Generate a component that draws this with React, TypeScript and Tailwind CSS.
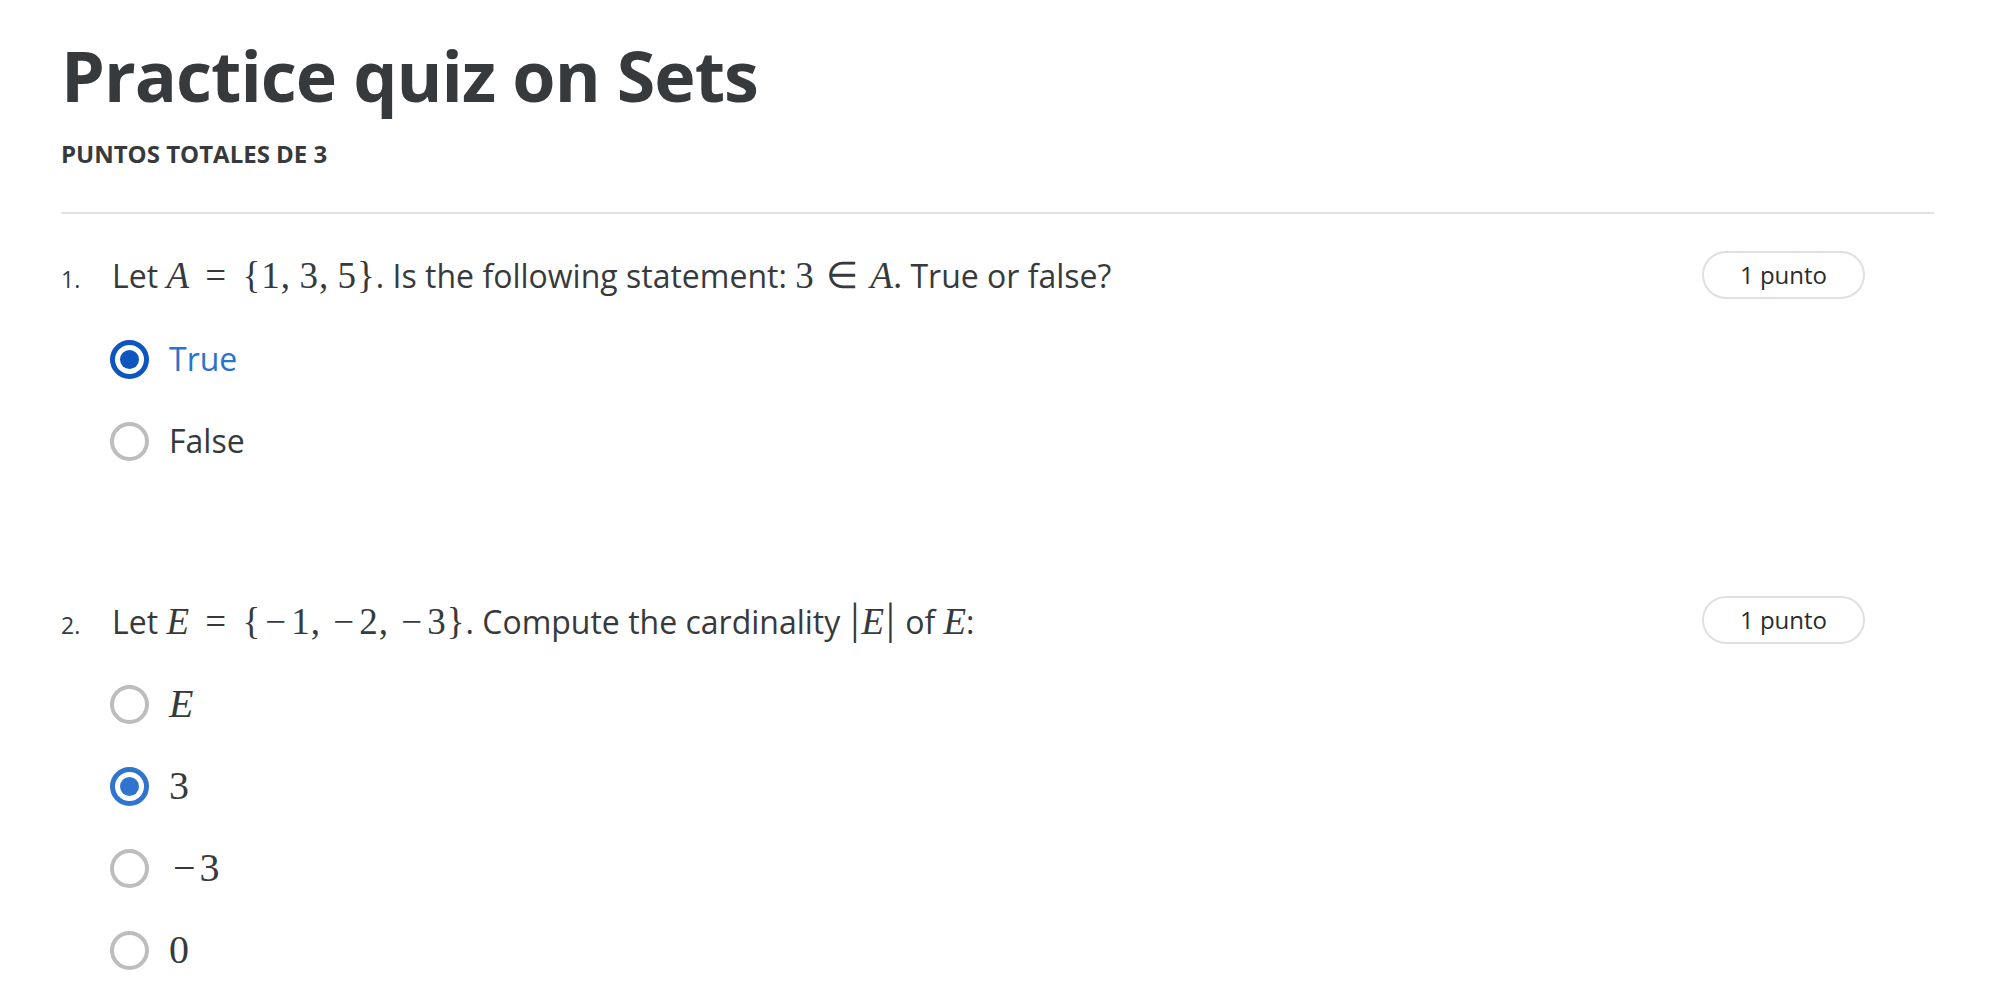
import React from 'react';

// math bits (KaTeX-ish, serif)
const M = ({ children, i, cls = '' }: { children: React.ReactNode; i?: boolean; cls?: string }) => (
    <span className={`font-['Liberation_Serif',serif] text-[37px] ${i ? 'italic' : ''} ${cls}`}>{children}</span>
);

// KaTeX minus is wider than the Times one
const Minus = () => <span className="inline-block px-[4px]">−</span>;

function Radio({ checked, tone }: { checked?: boolean; tone?: 'dark' | 'light' }) {
    if (!checked) {
        return <span className="w-[39px] h-[39px] rounded-full border-[4px] border-[#bdbdbd] shrink-0" />;
    }
    const ring = tone === 'dark' ? 'border-[#0c56bd]' : 'border-[#2f74cf]';
    const dot = tone === 'dark' ? 'bg-[#0c56bd]' : 'bg-[#2f74cf]';
    return (
        <span className={`w-[39px] h-[39px] rounded-full border-[5px] ${ring} shrink-0 flex items-center justify-center`}>
            <span className={`w-[19px] h-[19px] rounded-full ${dot}`} />
        </span>
    );
}

function Option({ children, checked, tone, blue }: { children: React.ReactNode; checked?: boolean; tone?: 'dark' | 'light'; blue?: boolean }) {
    return (
        <div className="flex items-center h-[82px] pl-[49px]">
            <Radio checked={checked} tone={tone} />
            <span className={`ml-[20px] text-[32px] leading-none ${blue ? 'text-[#2a73cc]' : ''}`}>{children}</span>
        </div>
    );
}

function Question({ num, children }: { num: string; children: React.ReactNode }) {
    return (
        <div className="flex items-center justify-between pr-[69px] h-[48px]">
            <div className="flex items-baseline leading-none">
                <span className="w-[51px] text-[23px]">{num}</span>
                <span className="text-[32px]">{children}</span>
            </div>
            <span className="w-[163px] h-[48px] rounded-full border-2 border-[#e0e0e0] flex items-center justify-center text-[24px] text-[#2b2b2b]">
                1 punto
            </span>
        </div>
    );
}

export default function App() {
    return (
        <div className="min-h-screen bg-white font-['Open_Sans',sans-serif] text-[#373a3c]">
            <div className="pl-[61px] pr-[70px] pt-[35px]">
                <h1 className="text-[70px] font-bold leading-[80px] tracking-[-1px]">Practice quiz on Sets</h1>
                <div className="mt-[24px] text-[24px] font-bold uppercase leading-[30px]">Puntos totales de 3</div>
                <div className="mt-[43px] h-[2px] bg-[#e1e1e1]" />

                <div className="mt-[37px]">
                    <Question num="1.">
                        Let <M i>A</M> <M cls="mx-[8px]">=</M> <M cls="tracking-[1px]">{'{'}1,&thinsp;3,&thinsp;5{'}'}</M>. Is the following statement: <M>3</M> <M cls="text-[27px] mx-[4px]">∈</M> <M i>A</M><M>.</M> True or false?
                    </Question>
                    <div className="mt-[19px]">
                        <Option checked tone="dark" blue>True</Option>
                        <Option>False</Option>
                    </div>
                </div>

                <div className="mt-[114px]">
                    <Question num="2.">
                        Let <M i>E</M> <M cls="mx-[8px]">=</M> <M cls="tracking-[1px]">{'{'}<Minus />1,&thinsp;<Minus />2,&thinsp;<Minus />3{'}'}</M>. Compute the cardinality <M cls="text-[44px] font-light px-[2px]">|</M><M i>E</M><M cls="text-[44px] font-light px-[2px]">|</M> of <M i>E</M>:
                    </Question>
                    <div className="mt-[19px]">
                        <Option><M i cls="text-[40px]">E</M></Option>
                        <Option checked tone="light"><M cls="text-[40px]">3</M></Option>
                        <Option><M cls="text-[40px]"><Minus />3</M></Option>
                        <Option><M cls="text-[40px]">0</M></Option>
                    </div>
                </div>
            </div>
        </div>
    );
}
